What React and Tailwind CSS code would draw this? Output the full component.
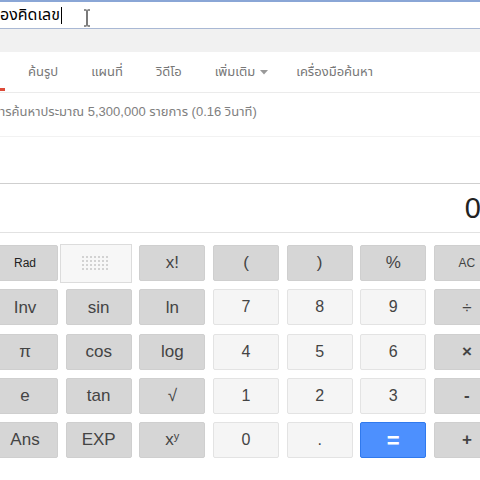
import React from 'react';

const font = { fontFamily: '"Liberation Sans", "Noto Sans Thai", "Noto Sans", sans-serif' };

const tabs = [
  { label: 'ค้นรูป', ml: 'ml-[28px]' },
  { label: 'แผนที่', ml: 'ml-[33px]' },
  { label: 'วิดีโอ', ml: 'ml-[33px]' },
  { label: 'เพิ่มเติม', ml: 'ml-[33px]', more: true },
  { label: 'เครื่องมือค้นหา', ml: 'ml-[28px]' },
];

// kind: op = dark grey, num = light grey, eq = blue
const rows = [
  [
    { t: '(', k: 'op' },
    { t: ')', k: 'op' },
    { t: '%', k: 'op' },
    { t: 'AC', k: 'op', small: true },
  ],
  [
    { t: 'Inv', k: 'op' },
    { t: 'sin', k: 'op' },
    { t: 'ln', k: 'op' },
    { t: '7', k: 'num' },
    { t: '8', k: 'num' },
    { t: '9', k: 'num' },
    { t: '÷', k: 'op' },
  ],
  [
    { t: 'π', k: 'op' },
    { t: 'cos', k: 'op' },
    { t: 'log', k: 'op' },
    { t: '4', k: 'num' },
    { t: '5', k: 'num' },
    { t: '6', k: 'num' },
    { t: '×', k: 'op', bold: true },
  ],
  [
    { t: 'e', k: 'op' },
    { t: 'tan', k: 'op' },
    { t: '√', k: 'op' },
    { t: '1', k: 'num' },
    { t: '2', k: 'num' },
    { t: '3', k: 'num' },
    { t: '-', k: 'op', bold: true },
  ],
  [
    { t: 'Ans', k: 'op' },
    { t: 'EXP', k: 'op' },
    { t: 'xy', k: 'op', pow: true },
    { t: '0', k: 'num' },
    { t: '.', k: 'num' },
    { t: '=', k: 'eq' },
    { t: '+', k: 'op', bold: true },
  ],
];

const Key = ({ b }) => {
  const base = 'w-[66px] h-[36px] shrink-0 flex items-center justify-center rounded-[2px] border';
  const look =
    b.k === 'eq'
      ? 'bg-[#4d90fe] border-[#3079ed] text-white text-[22px] font-bold'
      : b.k === 'num'
      ? 'bg-[#f5f5f5] border-[#e3e3e3] text-[#444] text-[16px]'
      : 'bg-[#d6d6d6] border-[#cfcfcf] text-[#444] ' + (b.small ? 'text-[12px]' : 'text-[17px]');
  return (
    <div className={`${base} ${look} ${b.bold ? 'font-bold text-[#333]' : ''}`}>
      {b.pow ? (
        <span>
          x<sup className="text-[11px]">y</sup>
        </span>
      ) : (
        b.t
      )}
    </div>
  );
};

const Dots = () => (
  <svg width="30" height="16" viewBox="0 0 30 16">
    {[0, 1, 2, 3].map((r) =>
      [0, 1, 2, 3, 4, 5, 6].map((c) => (
        <rect key={`${r}-${c}`} x={c * 4 + 1} y={r * 4 + 1} width="2" height="2" fill="#d2d2d2" />
      ))
    )}
  </svg>
);

export default function App() {
  return (
    <div className="w-[480px] h-[480px] overflow-hidden bg-white" style={font}>
      {/* search box */}
      <div className="relative h-[29px] border-t-2 border-b border-t-[#8aa6d6] border-b-[#a9b8d4] bg-white flex items-center">
        <span className="text-[16px] text-black leading-none">องคิดเลข</span>
        <span className="w-px h-[17px] bg-black ml-[1px]"></span>
        <svg className="absolute left-[83px] top-[7px]" width="8" height="18" viewBox="0 0 8 18">
          <path d="M1 1h2.5M4.5 1H7M4 1.5v15M1 17h2.5M4.5 17H7" stroke="#222" strokeWidth="1.2" fill="none" />
        </svg>
      </div>
      <div className="h-[23px] bg-[#f1f1f1]"></div>

      {/* tabs */}
      <div className="relative h-[41px] border-b border-[#ebebeb] flex items-center text-[13px] text-[#777]">
        {tabs.map((t) => (
          <div key={t.label} className={`${t.ml} flex items-center`}>
            {t.label}
            {t.more && (
              <svg className="ml-[5px]" width="8" height="5" viewBox="0 0 8 5">
                <path d="M0 0h8L4 4.5z" fill="#999" />
              </svg>
            )}
          </div>
        ))}
        <div className="absolute left-0 bottom-[1px] w-[5px] h-[3px] bg-[#dd4b39]"></div>
      </div>

      <div className="h-[38px] flex items-center text-[13px] text-[#808080]">
        ารค้นหาประมาณ 5,300,000 รายการ (0.16 วินาที)
      </div>

      {/* calculator */}
      <div className="mt-[5px] border-t border-[#f2f2f2]">
        <div className="h-[47px] border-b border-[#cfcfcf]"></div>
        <div className="h-[49px] border-b border-[#e2e2e2] flex items-center justify-end">
          <span className="text-[29px] text-[#222] leading-none translate-x-[1px]">0</span>
        </div>

        <div className="-ml-[8px] mt-[12px] flex flex-col gap-y-[8.3px]">
          <div className="flex gap-x-[7.67px]">
            <div className="w-[139.67px] shrink-0 flex items-center">
              <div className="w-[66px] h-[36px] shrink-0 flex items-center justify-center bg-[#d6d6d6] border border-[#cfcfcf] rounded-[2px] text-[12px] text-[#222]">
                Rad
              </div>
              <div className="ml-[2px] flex-1 h-[39px] -my-[2px] flex items-center justify-center bg-[#f7f7f7] border border-[#dcdcdc]">
                <Dots />
              </div>
            </div>
            <div className="w-[66px] h-[36px] shrink-0 flex items-center justify-center bg-[#d6d6d6] border border-[#cfcfcf] rounded-[2px] text-[17px] text-[#444]">
              x!
            </div>
            {rows[0].map((b) => (
              <Key key={b.t} b={b} />
            ))}
          </div>
          {rows.slice(1).map((r, i) => (
            <div key={i} className="flex gap-x-[7.67px]">
              {r.map((b) => (
                <Key key={b.t} b={b} />
              ))}
            </div>
          ))}
        </div>
      </div>
    </div>
  );
}
